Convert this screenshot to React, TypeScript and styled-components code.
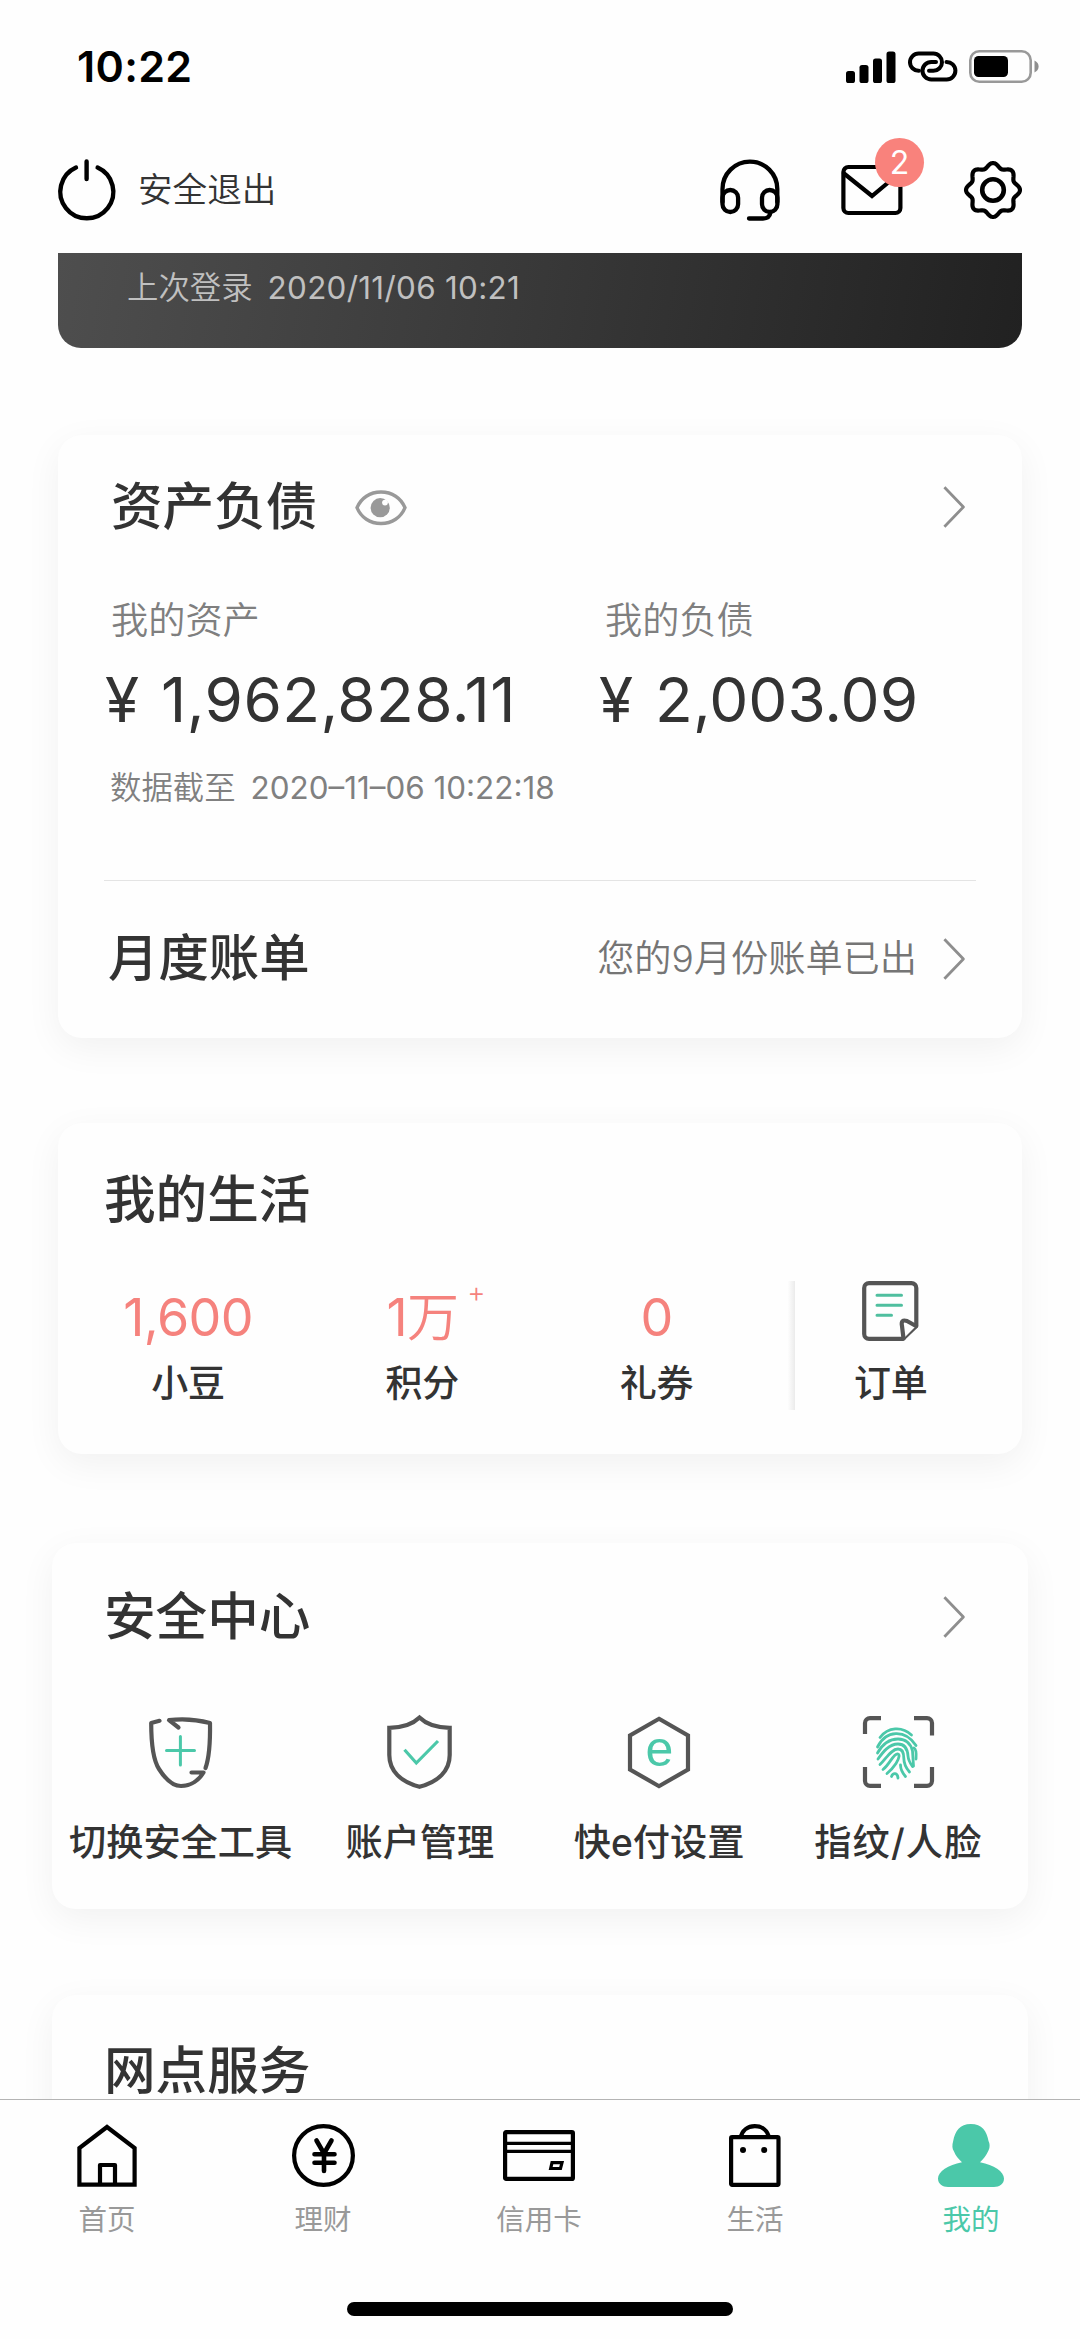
import React from "react";
import styled, { createGlobalStyle } from "styled-components";

const INK = "#333333";
const MINT = "#4bc8a9";
const CORAL = "#f5827d";
const STEEL = "#555555";

const GlobalStyle = createGlobalStyle`
  html, body { margin: 0; padding: 0; background: #fefefe; }
  * { box-sizing: border-box; }
  svg { display: block; flex: none; overflow: visible; }
`;

const Screen = styled.div`
  width: 1080px;
  height: 2339px;
  display: flex;
  flex-direction: column;
  overflow: hidden;
  background: #fefefe;
  color: ${INK};
  font-family: Inter, "Noto Sans CJK SC", sans-serif;
  font-weight: 400;
  white-space: nowrap;
`;

const StatusBar = styled.div`
  flex: none;
  height: 133px;
  padding: 0 41px 0 77px;
  display: flex;
  align-items: center;
  justify-content: space-between;
`;

const Clock = styled.span`
  font-size: 43px;
  font-weight: 600;
  line-height: 60px;
  margin-bottom: 1px;
  color: #000;
  letter-spacing: 0.3px;
`;

const StatusIcons = styled.div`
  display: flex;
  align-items: center;
  gap: 11.5px;
`;

const TopBar = styled.header`
  flex: none;
  height: 120px;
  padding: 0 58px 6px 58px;
  display: flex;
  align-items: center;
  justify-content: space-between;
`;

const LogoutButton = styled.div`
  display: flex;
  align-items: center;
  gap: 22px;
`;

const LogoutText = styled.span`
  font-size: 34.6px;
  font-weight: 350;
  line-height: 50px;
  margin-bottom: 2px;
`;

const Actions = styled.div`
  display: flex;
  align-items: center;
  gap: 61px;
`;

const MailButton = styled.div`
  position: relative;
`;

const Badge = styled.span`
  position: absolute;
  left: 34px;
  top: -26px;
  width: 49px;
  height: 49px;
  border-radius: 50%;
  background: #f9827c;
  color: #fff;
  font-size: 32px;
  font-weight: 400;
  line-height: 50px;
  text-align: center;
`;

const Content = styled.main`
  flex: none;
  height: 1846px;
  overflow: hidden;
  padding: 0 58px;
`;

const LoginBanner = styled.section`
  height: 95px;
  padding: 0 69px;
  border-radius: 0 0 23px 23px;
  background: linear-gradient(100deg, #4e4e4e 0%, #383838 50%, #212121 100%);
  color: #c0c0c0;
  font-size: 31.4px;
  font-weight: 350;
  line-height: 71px;
  display: flex;
  gap: 15px;
`;

const Digits = styled.span<{ $track: number }>`
  font-weight: 400;
  letter-spacing: ${(p) => p.$track}px;
`;

const Card = styled.section<{ $gap: number; $height: number; $top: number; $wide?: boolean }>`
  margin: ${(p) => p.$gap}px ${(p) => (p.$wide ? -6 : 0)}px 0;
  height: ${(p) => p.$height}px;
  padding-top: ${(p) => p.$top}px;
  border-radius: 24px;
  background: #fefefe;
  box-shadow: 0 10px 36px rgba(0, 0, 0, 0.055);
`;

const TitleRow = styled.div<{ $left: number; $right?: number }>`
  height: 80px;
  padding: 0 ${(p) => p.$right ?? 57}px 0 ${(p) => p.$left}px;
  display: flex;
  align-items: center;
`;

const Title = styled.h2<{ $size?: number }>`
  margin: 0 0 2px;
  font-size: ${(p) => p.$size ?? 51.6}px;
  font-weight: 500;
  line-height: 56px;
`;

const Spacer = styled.div`
  flex: 1;
`;

const EyeToggle = styled.span`
  margin: 1px 0 0 38px;
`;

const Figures = styled.div`
  margin-top: 49px;
  display: grid;
  grid-template-columns: 494px 1fr;
  padding-left: 47px;
`;

const FigureLabel = styled.div`
  padding-left: 6px;
  color: #7f7f7f;
  font-size: 37.2px;
  font-weight: 350;
  line-height: 50px;
`;

const Amount = styled.div`
  margin-top: 16px;
  font-size: 62px;
  line-height: 76px;
  display: flex;
  gap: 22px;
`;

const AsOf = styled.div`
  margin-top: 25px;
  padding-left: 52px;
  display: flex;
  gap: 15px;
  color: #808080;
  font-size: 31.4px;
  font-weight: 350;
  line-height: 50px;
`;

const Divider = styled.hr`
  margin: 67px 46px 0;
  border: 0;
  height: 1px;
  background: #e4e4e4;
`;

const BillRow = styled.div`
  height: 155px;
  padding: 0 57px 0 50px;
  display: flex;
  align-items: center;
  justify-content: space-between;
`;

const BillStatus = styled.div`
  display: flex;
  align-items: center;
  gap: 26px;
  color: #757575;
  font-size: 37.2px;
  font-weight: 350;
  line-height: 50px;
`;

const Stats = styled.div`
  margin: 41px 14px 0 13px;
  display: grid;
  grid-template-columns: repeat(4, 1fr);
`;

const Stat = styled.div<{ $ruled?: boolean }>`
  position: relative;
  display: flex;
  flex-direction: column;
  align-items: center;
  ${(p) =>
    p.$ruled &&
    `&::before {
      content: "";
      position: absolute;
      left: 14px;
      top: 0;
      width: 7px;
      height: 129px;
      background: linear-gradient(90deg, #fdfdfd, #ebebeb);
    }`}
`;

const StatValue = styled.div`
  position: relative;
  height: 74px;
  line-height: 74px;
  font-size: 52px;
  font-weight: 400;
  letter-spacing: -0.6px;
  color: ${CORAL};
`;

const Unit = styled.span`
  font-weight: 350;
`;

const Plus = styled.sup`
  position: absolute;
  left: 100%;
  top: -7px;
  margin-left: 9px;
  font-size: 28px;
  font-weight: 300;
  line-height: 36px;
`;

const StatLabel = styled.div`
  font-size: 37px;
  font-weight: 500;
  line-height: 58px;
`;

const Tools = styled.div`
  margin: 54px 10px 0 9px;
  display: grid;
  grid-template-columns: repeat(4, 1fr);
`;

const Tool = styled.div`
  display: flex;
  flex-direction: column;
  align-items: center;
`;

const ToolIcon = styled.div`
  height: 82px;
  display: flex;
  align-items: center;
`;

const ToolLabel = styled.div<{ $track?: number }>`
  margin-top: 25px;
  font-size: 37.2px;
  font-weight: 500;
  line-height: 50px;
  letter-spacing: ${(p) => p.$track ?? 0}px;
`;

const TabBar = styled.nav`
  flex: none;
  height: 240px;
  border-top: 1px solid #b4b4b4;
  background: #fefefe;
  display: flex;
  flex-direction: column;
  align-items: center;
`;

const Tabs = styled.div`
  flex: none;
  width: 1080px;
  height: 202px;
  margin-right: 2px;
  padding-top: 23px;
  display: grid;
  grid-template-columns: repeat(5, 1fr);
`;

const Tab = styled.div<{ $active?: boolean }>`
  display: flex;
  flex-direction: column;
  align-items: center;
  color: ${(p) => (p.$active ? MINT : "#999999")};
  font-size: 28.5px;
  font-weight: 400;
  line-height: 40px;
`;

const TabIcon = styled.div`
  height: 64px;
  margin-bottom: 13px;
  display: flex;
  align-items: center;
`;

const HomeIndicator = styled.div`
  width: 386px;
  height: 14px;
  border-radius: 7px;
  background: #000;
`;

const line = { fill: "none", strokeLinecap: "round", strokeLinejoin: "round" } as const;

const Signal = () => (
  <svg width="50" height="32" viewBox="0 0 50 32">
    <rect x="0" y="20" width="9" height="12" rx="2.6" />
    <rect x="13.5" y="14" width="9" height="18" rx="2.6" />
    <rect x="27" y="7.5" width="9" height="24.5" rx="2.6" />
    <rect x="40.5" y="0.5" width="9" height="31.5" rx="2.6" />
  </svg>
);

const LinkIcon = () => (
  <svg width="50" height="31" viewBox="0 0 50 31" stroke="#000" strokeWidth="4" {...line}>
    <path d="M11 19.8H10.6A8.6 8.6 0 0 1 10.6 2.6H25.4A8.6 8.6 0 0 1 25.4 19.8H21" />
    <path d="M38.5 10.9A8.8 8.8 0 0 1 38.7 28.5H23.3A8.8 8.8 0 0 1 23.3 10.9H28" />
  </svg>
);

const Battery = () => (
  <svg width="70" height="33" viewBox="0 0 70 33">
    <rect x="1.3" y="1.3" width="60.4" height="30.4" rx="9" fill="none" stroke="#999" strokeWidth="2.6" />
    <rect x="5" y="6" width="34" height="21" rx="4.5" />
    <path d="M65.5 10.5C71 13 71 20 65.5 22.5Z" fill="#8e8e8e" />
  </svg>
);

const Power = () => (
  <svg width="58" height="62" viewBox="0 0 58 62" stroke="#000" strokeWidth="4.4" {...line}>
    <path d="M18 8.6A26.5 26.5 0 1 0 39.6 8.6M28.6 2.5V20" />
  </svg>
);

const Headset = () => (
  <svg width="60" height="62" viewBox="0 0 60 62" stroke="#000" strokeWidth="4.3" {...line}>
    <path d="M2.5 43V30A27.3 27.3 0 0 1 57.3 30V43" />
    <rect x="2.5" y="31" width="15.6" height="22" rx="7.8" />
    <rect x="42" y="31" width="15.4" height="22" rx="7.7" />
    <path d="M50.5 53.5Q49.5 59.5 43 59.5H29" />
  </svg>
);

const Mail = () => (
  <svg width="62" height="52" viewBox="0 0 62 52" stroke="#000" strokeWidth="4.2" {...line}>
    <rect x="2.4" y="3" width="57" height="46" rx="5" />
    <path d="M3 9.5L31 32L58 9.5" strokeLinejoin="miter" />
  </svg>
);

const gearOutline =
  Array.from({ length: 120 }, (_, i) => {
    const a = (i / 120) * Math.PI * 2;
    const r = 24.7 + 2.3 * Math.cos(8 * a);
    return `${i ? "L" : "M"}${(29 + r * Math.sin(a)).toFixed(2)} ${(29 - r * Math.cos(a)).toFixed(2)}`;
  }).join("") + "Z";

const Gear = () => (
  <svg width="58" height="58" viewBox="0 0 58 58" stroke="#000" strokeWidth="4.2" {...line}>
    <path d={gearOutline} />
    <circle cx="29" cy="29" r="10.8" strokeWidth="4.6" />
  </svg>
);

const Eye = () => (
  <svg width="52" height="36" viewBox="0 0 52 36">
    <path
      d="M2 17.7C6 8 15 2 26 2S46 8 50 17.7C46 27.5 37 33.5 26 33.5S6 27.5 2 17.7Z"
      fill="none"
      stroke="#999"
      strokeWidth="3.4"
    />
    <circle cx="25.2" cy="17.7" r="9.6" fill="#999" />
    <circle cx="30" cy="12.6" r="2.9" fill="#fefefe" />
  </svg>
);

const Chevron = () => (
  <svg width="22" height="42" viewBox="0 0 22 42" stroke="#8e8e8e" strokeWidth="2.8" fill="none">
    <path d="M1.4 1.2L20.4 21L1.4 40.8" strokeLinejoin="round" />
  </svg>
);

const Order = () => (
  <svg width="57" height="60" viewBox="0 0 57 60" stroke={STEEL} strokeWidth="4.2" {...line}>
    <path d="M41 57.8H7A4.8 4.8 0 0 1 2.2 53V7A4.8 4.8 0 0 1 7 2.2H49.5A4.8 4.8 0 0 1 54.3 7V45Z" />
    <path d="M54 45L45 40Q38.5 38 40 45L41.5 57.5" fill="#fefefe" />
    <path d="M15 14.2H39.5M15 24.2H39.5M15 34.3H29.5" stroke="#4fbf9f" strokeWidth="3" />
  </svg>
);

const ShieldSwap = () => (
  <svg width="63" height="71" viewBox="0 0 63 71" stroke={STEEL} strokeWidth="4.2" {...line}>
    <path d="M10.5 3.8L2.2 6C2.2 25 3.5 42 10 52C17 63 24 69 32 69C42 69 50 63 54.5 55.5H42.5" />
    <path d="M29.5 10.5L20 3.2C34 1.4 48 2.6 61 6C61.3 25 60.5 40 56.5 51" />
    <path d="M17.5 33.5H45.5M31.4 19.5V48" stroke={MINT} strokeWidth="3" />
  </svg>
);

const ShieldCheck = () => (
  <svg width="65" height="74" viewBox="0 0 65 74" stroke={STEEL} strokeWidth="4.2" fill="none">
    <path d="M32.5 2.6C26 9 15 12.8 2.3 12.8V40C2.3 56 14 67 32.5 71.8C51 67 62.7 56 62.7 40V12.8C50 12.8 39 9 32.5 2.6Z" />
    <path d="M17.5 34.8L29.3 48L51 26" stroke={MINT} strokeWidth="3.2" />
  </svg>
);

const HexE = () => (
  <svg width="62" height="73" viewBox="0 0 62 73">
    <path d="M31 2.8L60 19.5V53.5L31 70.2L2 53.5V19.5Z" fill="none" stroke={STEEL} strokeWidth="4.2" />
    <text
      x="31.3"
      y="50.4"
      textAnchor="middle"
      fontFamily='"Liberation Sans", Arial, sans-serif'
      fontSize="50"
      fill={MINT}
    >
      e
    </text>
  </svg>
);

const Fingerprint = () => (
  <svg width="71" height="72" viewBox="0 0 71 72" fill="none">
    <path
      d="M2 18V7A5 5 0 0 1 7 2.2H18M51 2.2H64A5 5 0 0 1 69 7V19.5M2 51V65A5 5 0 0 0 7 69.8H18M69 51V65A5 5 0 0 1 64 69.8H51"
      stroke={STEEL}
      strokeWidth="4.2"
    />
    <g stroke={MINT} strokeWidth="2.8" strokeLinecap="round">
      <path d="M17 21.5C25 11 39 10 48.5 19" />
      <path d="M14.5 31C23 14 42 13 53 29.5" />
      <path d="M14.5 37C19 29 26 23 35 23C43 23 48 28 49.5 35L50.5 50" />
      <path d="M15 43C20 36 26 28 35 28C42 28 44.5 33 45 40C45.3 44 47 47 49.5 50.5" />
      <path d="M17 48.5C23 43 28 33 35 33C40 33 40.8 37 40.8 42C40.8 48 43 52 46.5 56" />
      <path d="M20 53.5C27 48 30 38 34.5 37.8C37 38 36.5 42 33 47.5C30 52 27 55 24 57.5" />
      <path d="M51 32C53 33 53.5 37 53 43" />
      <path d="M37.5 49C37.5 54 39.5 57 42.5 60.5" />
      <path d="M28.5 60.5C30 56.5 34.5 56.5 35 62" />
    </g>
  </svg>
);

const HomeTab = () => (
  <svg width="60" height="63" viewBox="0 0 60 63" stroke="#000" strokeWidth="4.2" fill="none">
    <path d="M30 3L57.6 24V60.6H2.4V24Z" />
    <path d="M23 60V41H38V60" strokeLinejoin="round" />
  </svg>
);

const CoinTab = () => (
  <svg width="63" height="63" viewBox="0 0 63 63" stroke="#000" strokeWidth="4.2" {...line}>
    <circle cx="31.5" cy="31.5" r="29.4" />
    <path d="M24.5 16.5L32 29.5L39.5 16.5M32 29.5V47M22.5 30.3H42.5M22.5 38.7H42.5" strokeWidth="4.6" />
  </svg>
);

const CardTab = () => (
  <svg width="72" height="51" viewBox="0 0 72 51" stroke="#000" strokeWidth="4.2" fill="none">
    <rect x="2.1" y="2.1" width="67.8" height="46.8" rx="1" />
    <path d="M2 13.3H70M2 21.3H70" strokeWidth="3.2" />
    <path d="M49 32.7H59L57.5 38.5H47.7Z" strokeWidth="3.2" />
  </svg>
);

const BagTab = () => (
  <svg width="52" height="63" viewBox="0 0 52 63" stroke="#000" strokeWidth="4.2" fill="none">
    <rect x="2.1" y="13.2" width="47.4" height="47.6" rx="1" />
    <path d="M11.6 14C13 6 19 2.2 25.8 2.2S38.6 6 40 14" />
    <circle cx="14" cy="26" r="3" fill="#000" stroke="none" />
    <circle cx="35.2" cy="26" r="3" fill="#000" stroke="none" />
  </svg>
);

const PersonTab = () => (
  <svg width="66" height="63" viewBox="0 0 66 63" fill={MINT}>
    <path d="M32.8 0C44 0 48.8 7 50.5 17C52.5 21 51.5 25 50 27.5C48 32 45.5 35 42 38.2C56 41 66 47.5 66 54.5C66 60 61.5 63 56 63H10C4.5 63 0 60 0 54.5C0 47.5 10 41 24 38.2C20.5 35 17.5 32 16 27.5C14 25 14 21 15.2 17C17 7 22 0 32.8 0Z" />
  </svg>
);

const tools = [
  { label: "切换安全工具", icon: <ShieldSwap /> },
  { label: "账户管理", icon: <ShieldCheck /> },
  { label: "快e付设置", icon: <HexE /> },
  { label: "指纹/人脸", icon: <Fingerprint />, track: 1.2 },
];

const tabs = [
  { label: "首页", icon: <HomeTab /> },
  { label: "理财", icon: <CoinTab /> },
  { label: "信用卡", icon: <CardTab /> },
  { label: "生活", icon: <BagTab /> },
  { label: "我的", icon: <PersonTab />, active: true },
];

export default function App() {
  return (
    <Screen>
      <GlobalStyle />
      <StatusBar>
        <Clock>10:22</Clock>
        <StatusIcons>
          <Signal />
          <LinkIcon />
          <Battery />
        </StatusIcons>
      </StatusBar>
      <TopBar>
        <LogoutButton>
          <Power />
          <LogoutText>安全退出</LogoutText>
        </LogoutButton>
        <Actions>
          <Headset />
          <MailButton>
            <Mail />
            <Badge>2</Badge>
          </MailButton>
          <Gear />
        </Actions>
      </TopBar>

      <Content>
        <LoginBanner>
          <span>上次登录</span>
          <Digits $track={0.3}>2020/11/06 10:21</Digits>
        </LoginBanner>

        <Card $gap={87} $height={603} $top={32}>
          <TitleRow $left={53}>
            <Title>资产负债</Title>
            <EyeToggle>
              <Eye />
            </EyeToggle>
            <Spacer />
            <Chevron />
          </TitleRow>
          <Figures>
            <div>
              <FigureLabel>我的资产</FigureLabel>
              <Amount>
                <span>¥</span>
                <Digits $track={0.4}>1,962,828.11</Digits>
              </Amount>
            </div>
            <div>
              <FigureLabel>我的负债</FigureLabel>
              <Amount>
                <span>¥</span>
                <Digits $track={0}>2,003.09</Digits>
              </Amount>
            </div>
          </Figures>
          <AsOf>
            <span>数据截至</span>
            <Digits $track={0}>2020–11–06 10:22:18</Digits>
          </AsOf>
          <Divider />
          <BillRow>
            <Title $size={50.4}>月度账单</Title>
            <BillStatus>
              <span>您的9月份账单已出</span>
              <Chevron />
            </BillStatus>
          </BillRow>
        </Card>

        <Card $gap={85} $height={331} $top={37}>
          <TitleRow $left={46}>
            <Title>我的生活</Title>
          </TitleRow>
          <Stats>
            <Stat>
              <StatValue>1,600</StatValue>
              <StatLabel>小豆</StatLabel>
            </Stat>
            <Stat>
              <StatValue>
                1<Unit>万</Unit>
                <Plus>+</Plus>
              </StatValue>
              <StatLabel>积分</StatLabel>
            </Stat>
            <Stat>
              <StatValue>0</StatValue>
              <StatLabel>礼券</StatLabel>
            </Stat>
            <Stat $ruled>
              <StatValue>
                <Order />
              </StatValue>
              <StatLabel>订单</StatLabel>
            </Stat>
          </Stats>
        </Card>

        <Card $gap={89} $height={366} $top={34} $wide>
          <TitleRow $left={52} $right={63}>
            <Title>安全中心</Title>
            <Spacer />
            <Chevron />
          </TitleRow>
          <Tools>
            {tools.map((t) => (
              <Tool key={t.label}>
                <ToolIcon>{t.icon}</ToolIcon>
                <ToolLabel $track={t.track}>{t.label}</ToolLabel>
              </Tool>
            ))}
          </Tools>
        </Card>

        <Card $gap={86} $height={366} $top={36} $wide>
          <TitleRow $left={52}>
            <Title>网点服务</Title>
          </TitleRow>
        </Card>
      </Content>

      <TabBar>
        <Tabs>
          {tabs.map((t) => (
            <Tab key={t.label} $active={t.active}>
              <TabIcon>{t.icon}</TabIcon>
              {t.label}
            </Tab>
          ))}
        </Tabs>
        <HomeIndicator />
      </TabBar>
    </Screen>
  );
}
